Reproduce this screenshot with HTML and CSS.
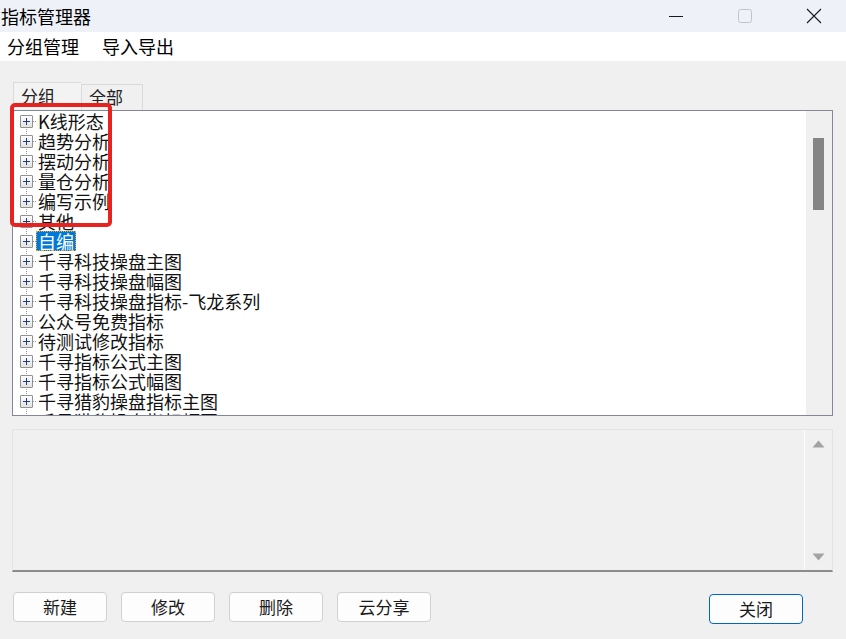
FILE: index.html
```html
<!DOCTYPE html>
<html lang="zh-CN">
<head>
    <meta charset="UTF-8">
    <meta name="viewport" content="width=device-width, initial-scale=1.0">
    <title>指标管理器</title>
    <link rel="stylesheet" href="styles.css">
</head>

<body>
    <div class="window">
        <div class="titlebar">
            <span class="title">指标管理器</span>
            <div class="win-controls">
                <div class="win-btn">
                    <svg width="16" height="16" viewBox="0 0 16 16"><path d="M1 8.5h14" stroke="#1a1a1a" stroke-width="1"/></svg>
                </div>
                <div class="win-btn">
                    <svg width="16" height="16" viewBox="0 0 16 16"><rect x="1.5" y="1.5" width="13" height="13" rx="2" fill="none" stroke="#c4c4c4" stroke-width="1"/></svg>
                </div>
                <div class="win-btn">
                    <svg width="16" height="16" viewBox="0 0 16 16"><path d="M1 1L15 15M15 1L1 15" stroke="#1a1a1a" stroke-width="1.1"/></svg>
                </div>
            </div>
        </div>

        <div class="menubar">
            <span class="menu-item">分组管理</span>
            <span class="menu-item">导入导出</span>
        </div>

        <div class="content">
            <div class="tabs">
                <div class="tab active">分组</div>
                <div class="tab">全部</div>
            </div>

            <div class="tree-panel">
                <ul class="tree">
                    <li class="tree-row"><span class="expander"></span><span class="tree-label">K线形态</span></li>
                    <li class="tree-row"><span class="expander"></span><span class="tree-label">趋势分析</span></li>
                    <li class="tree-row"><span class="expander"></span><span class="tree-label">摆动分析</span></li>
                    <li class="tree-row"><span class="expander"></span><span class="tree-label">量仓分析</span></li>
                    <li class="tree-row"><span class="expander"></span><span class="tree-label">编写示例</span></li>
                    <li class="tree-row"><span class="expander"></span><span class="tree-label">其他</span></li>
                    <li class="tree-row"><span class="expander"></span><span class="tree-label selected">自编</span></li>
                    <li class="tree-row"><span class="expander"></span><span class="tree-label">千寻科技操盘主图</span></li>
                    <li class="tree-row"><span class="expander"></span><span class="tree-label">千寻科技操盘幅图</span></li>
                    <li class="tree-row"><span class="expander"></span><span class="tree-label">千寻科技操盘指标-飞龙系列</span></li>
                    <li class="tree-row"><span class="expander"></span><span class="tree-label">公众号免费指标</span></li>
                    <li class="tree-row"><span class="expander"></span><span class="tree-label">待测试修改指标</span></li>
                    <li class="tree-row"><span class="expander"></span><span class="tree-label">千寻指标公式主图</span></li>
                    <li class="tree-row"><span class="expander"></span><span class="tree-label">千寻指标公式幅图</span></li>
                    <li class="tree-row"><span class="expander"></span><span class="tree-label">千寻猎豹操盘指标主图</span></li>
                    <li class="tree-row"><span class="expander"></span><span class="tree-label">千寻猎豹操盘指标幅图</span></li>
                </ul>
                <div class="vscroll">
                    <div class="vscroll-thumb"></div>
                </div>
            </div>

            <div class="note-panel">
                <div class="note-text"></div>
                <div class="note-scroll">
                    <svg width="13" height="8" viewBox="0 0 13 8"><path d="M6.5 0.5L12.5 7.5H0.5Z" fill="#a3a3a3"/></svg>
                    <svg width="13" height="8" viewBox="0 0 13 8"><path d="M0.5 0.5H12.5L6.5 7.5Z" fill="#a3a3a3"/></svg>
                </div>
            </div>

            <div class="buttons">
                <div class="btn-group">
                    <button class="btn">新建</button>
                    <button class="btn">修改</button>
                    <button class="btn">删除</button>
                    <button class="btn">云分享</button>
                </div>
                <button class="btn btn-default">关闭</button>
            </div>
        </div>

        <div class="annotation"></div>
    </div>
</body>
</html>
```

FILE: styles.css
```css
* {
  box-sizing: border-box;
}

body {
  margin: 0;
  background-color: #f0f0f0;
  font-family: "Noto Sans CJK SC", "Liberation Sans", sans-serif;
  color: #000;
}

.window {
  position: relative;
  width: 846px;
  height: 639px;
  overflow: hidden;
}

.titlebar {
  display: flex;
  align-items: center;
  justify-content: space-between;
  height: 32px;
  background-color: #eef2f8;
}

.title {
  padding-left: 1px;
  font-size: 18px;
  line-height: 32px;
}

.win-controls {
  display: flex;
}

.win-btn {
  display: flex;
  align-items: center;
  justify-content: center;
  width: 64px;
  height: 32px;
  margin-left: 5px;
}

.menubar {
  display: flex;
  gap: 23px;
  height: 29px;
  padding-left: 7px;
  background-color: #fff;
}

.menu-item {
  font-size: 18px;
  line-height: 29px;
}

.content {
  padding: 21px 13px 0 12px;
}

.tabs {
  display: flex;
  align-items: flex-end;
  height: 28px;
  padding-left: 1px;
}

.tab {
  height: 26px;
  padding: 0 7px;
  width: 62px;
  border: 1px solid #dadada;
  border-bottom: none;
  background-color: #f0f0f0;
  font-size: 17px;
  line-height: 24px;
  color: #222;
}

.tab.active {
  height: 28px;
  width: 68px;
  background-color: #f3f3f3;
  border-right: none;
  line-height: 26px;
}

.tree-panel {
  display: flex;
  height: 306px;
  border: 1px solid #82879a;
  background-color: #fff;
}

.tree {
  flex: 1;
  margin: 0;
  padding: 0;
  list-style: none;
  overflow: hidden;
  background-image: repeating-linear-gradient(to bottom, #9a9a9a 0, #9a9a9a 1px, transparent 1px, transparent 2px);
  background-size: 1px 100%;
  background-position: 13px 10px;
  background-repeat: no-repeat;
}

.tree-row {
  display: flex;
  align-items: center;
  height: 20px;
  padding-left: 7px;
}

.expander {
  position: relative;
  flex: none;
  width: 13px;
  height: 13px;
  border: 1px solid #919191;
  border-radius: 1px;
  background: linear-gradient(#ffffff, #e2e2e2);
}

.expander::before,
.expander::after {
  content: "";
  position: absolute;
  background-color: #1d3a7c;
}

.expander::before {
  left: 2px;
  top: 5px;
  width: 7px;
  height: 1px;
}

.expander::after {
  left: 5px;
  top: 2px;
  width: 1px;
  height: 7px;
}

.tree-label {
  position: relative;
  margin-left: 3px;
  padding: 0 2px;
  font-size: 18px;
  line-height: 20px;
  white-space: nowrap;
  color: #111;
}

.tree-label::before {
  content: "";
  position: absolute;
  left: -3px;
  top: 10px;
  width: 3px;
  border-top: 1px dotted #9a9a9a;
}

.tree-label.selected {
  background-color: #0078d7;
  color: #fff;
  outline: 1px dotted #f5a623;
  outline-offset: -1px;
}

.vscroll {
  flex: none;
  width: 26px;
  padding: 27px 0 0 7px;
  background-color: #f0f0f0;
}

.vscroll-thumb {
  width: 11px;
  height: 72px;
  background-color: #858585;
}

.note-panel {
  display: flex;
  height: 143px;
  margin-top: 13px;
  border: 1px solid #e3e3e3;
  border-bottom: 2px solid #8c8c8c;
  background-color: #f0f0f0;
}

.note-text {
  flex: 1;
  border-right: 1px solid #fdfdfd;
}

.note-scroll {
  display: flex;
  flex-direction: column;
  justify-content: space-between;
  align-items: center;
  width: 27px;
  padding: 10px 0 9px 0;
}

.buttons {
  display: flex;
  justify-content: space-between;
  align-items: flex-start;
  margin-top: 20px;
  padding-left: 1px;
  padding-right: 30px;
}

.btn-group {
  display: flex;
  gap: 14px;
}

.btn {
  width: 94px;
  height: 30px;
  padding: 0;
  border: 1px solid #d0d0d0;
  border-radius: 4px;
  background-color: #fdfdfd;
  font-family: "Noto Sans CJK SC", sans-serif;
  font-size: 17px;
  line-height: 28px;
  color: #1a1a1a;
}

.btn-default {
  margin-top: 2px;
  border: 1.5px solid #0067c0;
}

.annotation {
  position: absolute;
  left: 10px;
  top: 103px;
  width: 102px;
  height: 124px;
  border: 4px solid #e8231f;
  border-radius: 5px;
}
```
